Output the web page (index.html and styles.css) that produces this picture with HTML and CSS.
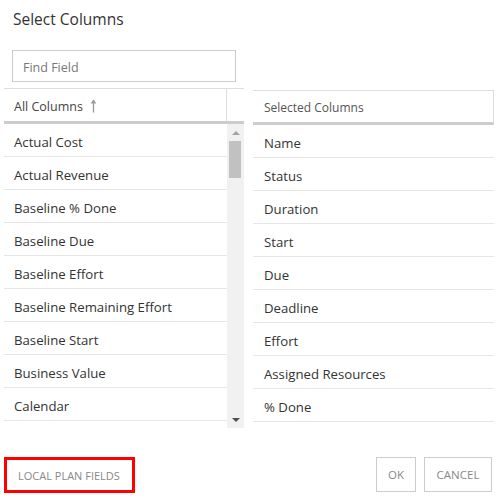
FILE: index.html
```html
<!DOCTYPE html>
<html>
<head>
<meta charset="utf-8">
<link rel="stylesheet" href="styles.css">
</head>
<body>
<div class="dialog">
  <div class="title">Select Columns</div>
  <div class="search"><input class="search-input" type="text" placeholder="Find Field"></div>
  <div class="panes">
    <div class="pane left">
      <div class="head">
        <div class="head-cell">All Columns
          <svg class="sort" width="7" height="14" viewBox="0 0 7 14"><path d="M3.5 1 V13.5" fill="none" stroke="#999" stroke-width="1.3"/><path d="M0.6 4.6 L3.5 0.6 L6.4 4.6 Z" fill="#999"/></svg>
        </div>
      </div>
      <div class="body">
        <div class="list">
          <div class="row">Actual Cost</div>
          <div class="row">Actual Revenue</div>
          <div class="row">Baseline % Done</div>
          <div class="row">Baseline Due</div>
          <div class="row">Baseline Effort</div>
          <div class="row">Baseline Remaining Effort</div>
          <div class="row">Baseline Start</div>
          <div class="row">Business Value</div>
          <div class="row">Calendar</div>
        </div>
        <div class="scrollbar">
          <div class="arrow up"></div>
          <div class="track"><div class="thumb"></div></div>
          <div class="arrow down"></div>
        </div>
      </div>
    </div>
    <div class="pane right">
      <div class="head"><div class="head-cell small">Selected Columns</div></div>
      <div class="list">
        <div class="row">Name</div>
        <div class="row">Status</div>
        <div class="row">Duration</div>
        <div class="row">Start</div>
        <div class="row">Due</div>
        <div class="row">Deadline</div>
        <div class="row">Effort</div>
        <div class="row">Assigned Resources</div>
        <div class="row">% Done</div>
      </div>
    </div>
  </div>
  <div class="footer">
    <button class="btn local">LOCAL PLAN FIELDS</button>
    <div class="actions">
      <button class="btn ok">OK</button>
      <button class="btn cancel">CANCEL</button>
    </div>
  </div>
</div>
</body>
</html>
```
FILE: styles.css
```css
html, body {
  margin: 0;
  padding: 0;
  background: #fff;
}
body {
  font-family: "Open Sans", "Noto Sans", sans-serif;
  color: #333;
  width: 499px;
  height: 499px;
  overflow: hidden;
}
.dialog {
  padding-top: 8px;
}
.title {
  font-size: 15.5px;
  line-height: 22px;
  height: 22px;
  margin-left: 13px;
  color: #333;
}
.search {
  margin-top: 20px;
  margin-left: 12px;
}
.search-input {
  box-sizing: border-box;
  width: 224px;
  height: 32px;
  border: 1px solid #ccc;
  padding: 2px 10px 0;
  font-family: inherit;
  font-size: 12.5px;
  color: #333;
  outline: none;
  margin: 0;
  display: block;
}
.search-input::placeholder {
  color: #777;
}
.panes {
  display: flex;
  align-items: flex-start;
  margin-top: 6px;
  margin-left: 4px;
  gap: 9px;
}
.pane.left {
  width: 240px;
}
.pane.right {
  width: 241px;
  margin-top: 2px;
}
.head {
  display: flex;
  border-top: 1px solid #ddd;
  border-bottom: 3px solid #ccc;
  height: 32px;
}
.right .head {
  height: 31px;
  border-right: 1px solid #ddd;
}
.head-cell {
  box-sizing: border-box;
  width: 223px;
  border-right: 1px solid #ddd;
  display: flex;
  align-items: center;
  padding-left: 10px;
  padding-top: 2px;
  font-size: 12.5px;
  color: #444;
  gap: 7px;
}
.head-cell.small {
  border-right: none;
  width: auto;
  font-size: 12px;
  color: #555;
  padding-left: 11px;
}
.sort {
  display: block;
  margin-top: -1px;
}
.body {
  display: flex;
  height: 304px;
}
.left .list {
  width: 223px;
  height: 304px;
  overflow: hidden;
}
.row {
  box-sizing: border-box;
  height: 33px;
  border-bottom: 1px solid #e6e6e6;
  display: flex;
  align-items: center;
  padding-left: 10px;
  padding-top: 3px;
  font-size: 13.2px;
  color: #333;
  white-space: nowrap;
}
.right .row {
  padding-left: 11px;
}
.scrollbar {
  width: 17px;
  height: 304px;
  background: #f1f1f1;
  display: flex;
  flex-direction: column;
}
.arrow {
  height: 17px;
  display: flex;
  justify-content: center;
  align-items: center;
}
.arrow.up::before {
  content: "";
  border-left: 4px solid transparent;
  border-right: 4px solid transparent;
  border-bottom: 4px solid #a3a3a3;
}
.arrow.down::before {
  content: "";
  border-left: 4px solid transparent;
  border-right: 4px solid transparent;
  border-top: 4px solid #505050;
}
.track {
  flex: 1;
}
.thumb {
  width: 12px;
  margin-left: 2px;
  height: 37px;
  background: #c1c1c1;
}
.footer {
  display: flex;
  justify-content: space-between;
  margin-top: 29px;
  margin-left: 4px;
  margin-right: 7px;
}
.actions {
  display: flex;
  gap: 8px;
}
.btn {
  box-sizing: border-box;
  height: 35px;
  background: #fff;
  border: 1px solid #ccc;
  font-family: inherit;
  font-size: 11.5px;
  color: #888;
  padding: 0;
  margin: 0;
  white-space: nowrap;
  text-align: center;
}
.btn.ok {
  width: 40px;
}
.btn.cancel {
  width: 68px;
}
.btn.local {
  border: 3px solid #f00;
  width: 131px;
  height: 36px;
  padding: 0 0 0 11px;
  font-size: 11px;
  text-align: left;
}
```
